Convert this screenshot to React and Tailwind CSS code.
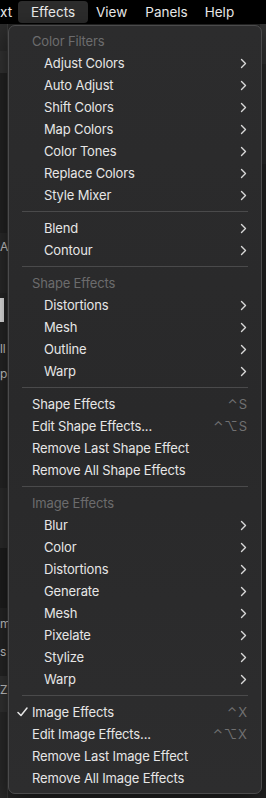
import { Fragment } from 'react'

const menu = [
  { type: 'header', label: 'Color Filters' },
  { type: 'sub', label: 'Adjust Colors' },
  { type: 'sub', label: 'Auto Adjust' },
  { type: 'sub', label: 'Shift Colors' },
  { type: 'sub', label: 'Map Colors' },
  { type: 'sub', label: 'Color Tones' },
  { type: 'sub', label: 'Replace Colors' },
  { type: 'sub', label: 'Style Mixer' },
  { type: 'sep' },
  { type: 'sub', label: 'Blend' },
  { type: 'sub', label: 'Contour' },
  { type: 'sep' },
  { type: 'header', label: 'Shape Effects' },
  { type: 'sub', label: 'Distortions' },
  { type: 'sub', label: 'Mesh' },
  { type: 'sub', label: 'Outline' },
  { type: 'sub', label: 'Warp' },
  { type: 'sep' },
  { type: 'item', label: 'Shape Effects', keys: '⌃S' },
  { type: 'item', label: 'Edit Shape Effects...', keys: '⌃⌥S' },
  { type: 'item', label: 'Remove Last Shape Effect' },
  { type: 'item', label: 'Remove All Shape Effects' },
  { type: 'sep' },
  { type: 'header', label: 'Image Effects' },
  { type: 'sub', label: 'Blur' },
  { type: 'sub', label: 'Color' },
  { type: 'sub', label: 'Distortions' },
  { type: 'sub', label: 'Generate' },
  { type: 'sub', label: 'Mesh' },
  { type: 'sub', label: 'Pixelate' },
  { type: 'sub', label: 'Stylize' },
  { type: 'sub', label: 'Warp' },
  { type: 'sep' },
  { type: 'item', label: 'Image Effects', keys: '⌃X', checked: true },
  { type: 'item', label: 'Edit Image Effects...', keys: '⌃⌥X' },
  { type: 'item', label: 'Remove Last Image Effect' },
  { type: 'item', label: 'Remove All Image Effects' },
]

function Chevron() {
  return (
    <svg width="7" height="11" viewBox="0 0 7 11" className="shrink-0">
      <polyline points="1.5,1.5 5.5,5.5 1.5,9.5" fill="none" stroke="#d8d8d8" strokeWidth="1.4" strokeLinecap="round" strokeLinejoin="round" />
    </svg>
  )
}

function Check() {
  return (
    <svg width="11" height="10" viewBox="0 0 11 10" className="absolute left-[8px] top-[6px]">
      <polyline points="1,5.5 4,8.5 10,1" fill="none" stroke="#e6e6e6" strokeWidth="1.5" strokeLinecap="round" strokeLinejoin="round" />
    </svg>
  )
}

function Row({ row }) {
  if (row.type === 'sep') {
    return (
      <div className="h-[11px] flex items-center px-[13px]">
        <div className="h-px w-full bg-[#4a4a4b]" />
      </div>
    )
  }
  if (row.type === 'header') {
    return (
      <div className="h-[22px] flex items-center pl-[23px] text-[#6c6c6d]">{row.label}</div>
    )
  }
  if (row.type === 'sub') {
    return (
      <div className="h-[22px] flex items-center justify-between pl-[35px] pr-[14px] text-[#e6e6e6]">
        <span>{row.label}</span>
        <Chevron />
      </div>
    )
  }
  return (
    <div className="relative h-[22px] flex items-center justify-between pl-[23px] pr-[13px] text-[#e6e6e6]">
      {row.checked && <Check />}
      <span>{row.label}</span>
      {row.keys && <span className="text-[#707071] tracking-[1px]">{row.keys}</span>}
    </div>
  )
}

export default function App() {
  return (
    <div className="relative w-[266px] h-[798px] overflow-hidden bg-[#262626] text-[13px] tracking-[-0.15px] font-['Inter','Liberation_Sans',sans-serif]">
      {/* menu bar */}
      <div className="h-6 bg-black flex items-center text-[#ececec] text-[13.5px] tracking-normal">
        <span className="w-[18px]">xt</span>
        <div className="h-[22px] w-[70px] rounded-[4px] bg-[#2c2c2c] flex items-center justify-center">Effects</div>
        <span className="ml-[8px]">View</span>
        <span className="ml-[18px]">Panels</span>
        <span className="ml-[17px]">Help</span>
      </div>

      {/* app content peeking out behind the menu */}
      <div className="flex h-[774px]">
        <div className="w-[8px] flex flex-col border-r border-[#3a3a3a] text-[#cfcfcf] text-[12px] leading-none">
          <div className="h-[27px] bg-[#2c2c2c]" />
          <div className="h-[22px] bg-[#333]" />
          <div className="h-[160px] bg-[#232323]" />
          <div className="h-[60px] bg-[#2a2a2a] pt-[8px]">A</div>
          <div className="h-[50px] pt-[5px]"><div className="w-[4px] h-[24px] bg-[#e8e8e8]" /></div>
          <div className="h-[25px]">ll</div>
          <div className="h-[120px]">p</div>
          <div className="h-[60px] bg-[#2c2c2c]" />
          <div className="h-[60px] bg-[#1e1e1e]" />
          <div className="h-[30px] pt-[10px]">m</div>
          <div className="h-[38px] pt-[8px]">s</div>
          <div className="h-[36px] bg-[#333] pt-[8px]">Z</div>
          <div className="flex-1 bg-[#2a2a2a]" />
        </div>
        <div className="flex-1" />
        <div className="w-[6px] flex flex-col bg-[#2a2a2a]">
          <div className="h-[40px] bg-[#333]" />
          <div className="h-[100px]" />
          <div className="flex-1 bg-[#232323]" />
        </div>
      </div>

      {/* dropdown menu */}
      <div className="absolute left-[8px] top-[25px] w-[254px] py-[4px] rounded-[7px] border border-[#4b4b4c] bg-gradient-to-b from-[#2c2c2d] via-[#29292a] to-[#2d2d2e] shadow-[0_8px_24px_rgba(0,0,0,0.6)] leading-none">
        {menu.map((row, i) => (
          <Fragment key={i}>
            <Row row={row} />
          </Fragment>
        ))}
      </div>
    </div>
  )
}
